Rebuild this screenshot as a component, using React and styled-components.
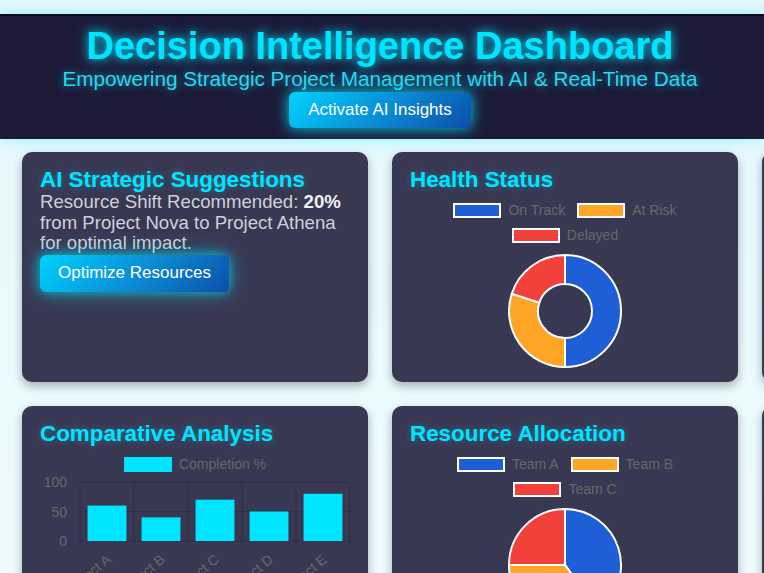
import React from 'react';
import styled, { createGlobalStyle } from 'styled-components';

const GlobalStyle = createGlobalStyle`
  html, body {
    margin: 0;
    padding: 0;
  }
  body {
    background: linear-gradient(180deg, #e4f8fc 0%, #eefbfe 100%);
    font-family: "Liberation Sans", Arial, sans-serif;
    overflow: hidden;
    width: 764px;
    height: 573px;
  }
`;

const Page = styled.div`
  padding-top: 14px;
`;

const Header = styled.header`
  background: #1c1a37;
  border-top: 2px solid #0c0b1f;
  box-shadow: 0 0 14px rgba(0, 229, 255, 0.35);
  padding: 9px 4px 11px 0;
  display: flex;
  flex-direction: column;
  align-items: center;
`;

const Title = styled.h1`
  margin: 0;
  font-size: 38px;
  line-height: 42px;
  font-weight: 700;
  color: #00e5ff;
  text-shadow: 0 0 8px rgba(0, 229, 255, 0.8), 0 0 18px rgba(0, 229, 255, 0.5);
`;

const Subtitle = styled.p`
  margin: 0;
  font-size: 20.7px;
  line-height: 23px;
  color: #2ad8f0;
  text-shadow: 0 0 8px rgba(0, 229, 255, 0.6);
`;

const GlowButton = styled.button`
  margin-top: ${(p) => p.$top || 0}px;
  font-family: "Liberation Sans", Arial, sans-serif;
  font-size: ${(p) => p.$size || 16}px;
  color: #fff;
  border: none;
  border-radius: 6px;
  padding: 0 ${(p) => p.$px || 18}px;
  height: ${(p) => p.$h || 36}px;
  background: linear-gradient(135deg, #00d2ff 0%, #0a8fd6 50%, #0b4fa8 100%);
  box-shadow: 0 0 12px rgba(0, 229, 255, 0.7), 0 0 22px rgba(0, 229, 255, 0.35);
  cursor: pointer;
  align-self: ${(p) => p.$align || 'center'};
`;

const Grid = styled.main`
  display: grid;
  grid-template-columns: repeat(3, 346px);
  grid-auto-rows: 230px;
  gap: 24px;
  padding: 13px 0 0 22px;
`;

const Card = styled.section`
  box-sizing: border-box;
  background: #393853;
  border-radius: 10px;
  box-shadow: 0 4px 10px rgba(0, 0, 0, 0.3);
  padding: 15px 18px;
  display: flex;
  flex-direction: column;
`;

const CardTitle = styled.h2`
  margin: 0;
  font-size: 22.4px;
  line-height: 25px;
  font-weight: 700;
  color: #00e5ff;
  text-shadow: 0 0 6px rgba(0, 229, 255, 0.35);
`;

const Body = styled.p`
  margin: 0;
  font-size: 18.6px;
  line-height: 20.5px;
  color: #cdd0d8;
  b {
    color: #f1f1f4;
  }
`;

const Legend = styled.div`
  display: flex;
  flex-wrap: wrap;
  justify-content: center;
  column-gap: 12px;
  row-gap: 10px;
  margin: 11px 0 0;
  padding: 0 ${(p) => p.$pad || 60}px;
`;

const LegendItem = styled.div`
  display: flex;
  align-items: center;
  gap: 7px;
  font-size: 14px;
  line-height: 15px;
  color: #666;
`;

const Swatch = styled.span`
  box-sizing: border-box;
  width: 48px;
  height: 15px;
  background: ${(p) => p.$color};
  border: 2px solid ${(p) => p.$border || '#fff'};
`;

const ChartWrap = styled.div`
  display: flex;
  justify-content: center;
  margin-top: ${(p) => p.$top || 10}px;
`;

const BLUE = '#1f5fd6';
const ORANGE = '#ffa526';
const RED = '#f2413a';
const CYAN = '#00e5ff';

const pt = (cx, cy, r, f) => [
  cx + r * Math.sin(2 * Math.PI * f),
  cy - r * Math.cos(2 * Math.PI * f),
];

function slicePath(cx, cy, R, r, a0, a1) {
  const large = a1 - a0 > 0.5 ? 1 : 0;
  const [x0, y0] = pt(cx, cy, R, a0);
  const [x1, y1] = pt(cx, cy, R, a1);
  if (!r) {
    return `M${cx} ${cy} L${x0} ${y0} A${R} ${R} 0 ${large} 1 ${x1} ${y1} Z`;
  }
  const [x2, y2] = pt(cx, cy, r, a1);
  const [x3, y3] = pt(cx, cy, r, a0);
  return `M${x0} ${y0} A${R} ${R} 0 ${large} 1 ${x1} ${y1} L${x2} ${y2} A${r} ${r} 0 ${large} 0 ${x3} ${y3} Z`;
}

function Pie({ data, inner = 0 }) {
  const total = data.reduce((s, d) => s + d.value, 0);
  let acc = 0;
  return (
    <svg width="116" height="116" viewBox="0 0 116 116">
      {data.map((d) => {
        const a0 = acc / total;
        acc += d.value;
        const a1 = acc / total;
        return (
          <path
            key={d.label}
            d={slicePath(58, 58, 56, inner, a0, a1)}
            fill={d.color}
            stroke="#fff"
            strokeWidth="2"
          />
        );
      })}
    </svg>
  );
}

function ChartLegend({ data, pad, border }) {
  return (
    <Legend $pad={pad}>
      {data.map((d) => (
        <LegendItem key={d.label}>
          <Swatch $color={d.color} $border={border} />
          {d.label}
        </LegendItem>
      ))}
    </Legend>
  );
}

const projects = [
  { label: 'Project A', value: 60 },
  { label: 'Project B', value: 40 },
  { label: 'Project C', value: 70 },
  { label: 'Project D', value: 50 },
  { label: 'Project E', value: 80 },
];

function BarChart() {
  const left = 40;
  const right = 310;
  const top = 7;
  const bottom = 66;
  const step = (right - left) / projects.length;
  const scale = (bottom - top) / 100;
  return (
    <svg width="310" height="110" viewBox="0 0 310 110" style={{ overflow: 'visible' }}>
      {[0, 50, 100].map((v) => (
        <g key={v}>
          <line x1={left} x2={right} y1={bottom - v * scale} y2={bottom - v * scale} stroke="rgba(0,0,0,0.16)" />
          <text
            x="27"
            y={bottom - v * scale + 5}
            textAnchor="end"
            fontSize="14"
            fill="#666"
            fontFamily="Liberation Sans, Arial, sans-serif"
          >
            {v}
          </text>
        </g>
      ))}
      {projects.map((p, i) => (
        <line key={p.label} x1={left + i * step} x2={left + i * step} y1={top} y2={bottom + 6} stroke="rgba(0,0,0,0.16)" />
      ))}
      <line x1={right} x2={right} y1={top} y2={bottom + 6} stroke="rgba(0,0,0,0.16)" />
      {projects.map((p, i) => {
        const w = step * 0.72;
        const x = left + i * step + (step - w) / 2;
        const h = p.value * scale;
        const cx = left + i * step + step / 2;
        return (
          <g key={p.label}>
            <rect x={x} y={bottom - h} width={w} height={h} fill={CYAN} />
            <text
              x={cx + 5}
              y={bottom + 20}
              textAnchor="end"
              fontSize="14"
              fill="#666"
              fontFamily="Liberation Sans, Arial, sans-serif"
              transform={`rotate(-40 ${cx + 5} ${bottom + 20})`}
            >
              {p.label}
            </text>
          </g>
        );
      })}
    </svg>
  );
}

const health = [
  { label: 'On Track', value: 50, color: BLUE },
  { label: 'At Risk', value: 30, color: ORANGE },
  { label: 'Delayed', value: 20, color: RED },
];

const teams = [
  { label: 'Team A', value: 40, color: BLUE },
  { label: 'Team B', value: 35, color: ORANGE },
  { label: 'Team C', value: 25, color: RED },
];

export default function App() {
  return (
    <>
      <GlobalStyle />
      <Page>
        <Header>
          <Title>Decision Intelligence Dashboard</Title>
          <Subtitle>Empowering Strategic Project Management with AI &amp; Real-Time Data</Subtitle>
          <GlowButton $top={2} $size={17} $px={19}>Activate AI Insights</GlowButton>
        </Header>
        <Grid>
          <Card>
            <CardTitle>AI Strategic Suggestions</CardTitle>
            <Body>
              Resource Shift Recommended: <b>20%</b> from Project Nova to Project Athena for optimal impact.
            </Body>
            <GlowButton $align="flex-start" $h={37} $px={18} $size={17} $top={1}>
              Optimize Resources
            </GlowButton>
          </Card>
          <Card>
            <CardTitle>Health Status</CardTitle>
            <ChartLegend data={health} pad={40} />
            <ChartWrap $top={10}>
              <Pie data={health} inner={27} />
            </ChartWrap>
          </Card>
          <Card>
            <CardTitle>Risk Forecast</CardTitle>
          </Card>
          <Card>
            <CardTitle>Comparative Analysis</CardTitle>
            <ChartLegend data={[{ label: 'Completion %', color: CYAN }]} border={CYAN} />
            <ChartWrap $top={3}>
              <BarChart />
            </ChartWrap>
          </Card>
          <Card>
            <CardTitle>Resource Allocation</CardTitle>
            <ChartLegend data={teams} pad={40} />
            <ChartWrap $top={10}>
              <Pie data={teams} />
            </ChartWrap>
          </Card>
          <Card>
            <CardTitle>Timeline Overview</CardTitle>
          </Card>
        </Grid>
      </Page>
    </>
  );
}
